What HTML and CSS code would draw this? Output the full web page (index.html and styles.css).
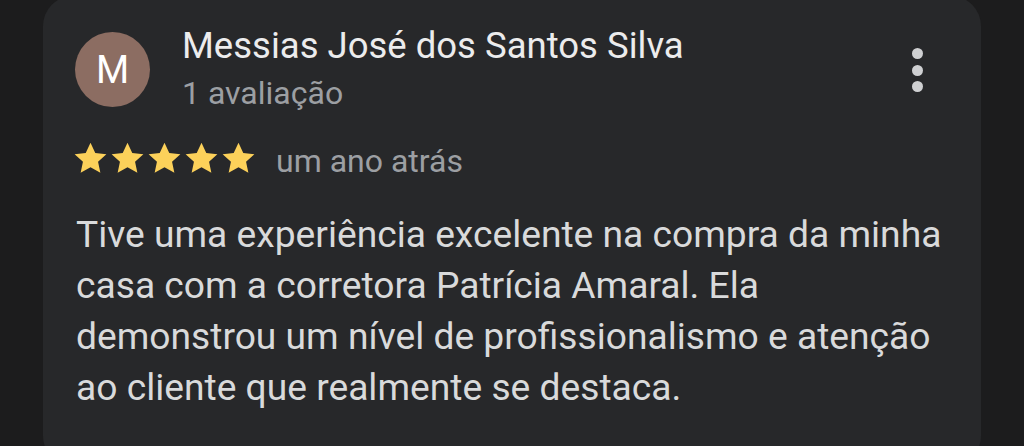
FILE: index.html
```html
<!DOCTYPE html>
<html lang="pt">
<head>
<meta charset="utf-8">
<link rel="stylesheet" href="styles.css">
</head>
<body>
<div class="card">
  <div class="header">
    <div class="avatar">M</div>
    <div class="who">
      <div class="name">Messias José dos Santos Silva</div>
      <div class="count">1 avaliação</div>
    </div>
    <div class="menu" aria-label="Mais opções">
      <span class="dot"></span><span class="dot"></span><span class="dot"></span>
    </div>
  </div>
  <div class="meta">
    <div class="stars">
      <svg viewBox="0 0 24 24" class="star"><path d="M12 1.8l3.1 6.6 7.2.8-5.4 4.9 1.5 7.1L12 17.6l-6.4 3.6 1.5-7.1-5.4-4.9 7.2-.8z"/></svg>
      <svg viewBox="0 0 24 24" class="star"><path d="M12 1.8l3.1 6.6 7.2.8-5.4 4.9 1.5 7.1L12 17.6l-6.4 3.6 1.5-7.1-5.4-4.9 7.2-.8z"/></svg>
      <svg viewBox="0 0 24 24" class="star"><path d="M12 1.8l3.1 6.6 7.2.8-5.4 4.9 1.5 7.1L12 17.6l-6.4 3.6 1.5-7.1-5.4-4.9 7.2-.8z"/></svg>
      <svg viewBox="0 0 24 24" class="star"><path d="M12 1.8l3.1 6.6 7.2.8-5.4 4.9 1.5 7.1L12 17.6l-6.4 3.6 1.5-7.1-5.4-4.9 7.2-.8z"/></svg>
      <svg viewBox="0 0 24 24" class="star"><path d="M12 1.8l3.1 6.6 7.2.8-5.4 4.9 1.5 7.1L12 17.6l-6.4 3.6 1.5-7.1-5.4-4.9 7.2-.8z"/></svg>
    </div>
    <span class="when">um ano atrás</span>
  </div>
  <p class="text">Tive uma experiência excelente na compra da minha casa com a corretora Patrícia Amaral. Ela demonstrou um nível de profissionalismo e atenção ao cliente que realmente se destaca.</p>
</div>
</body>
</html>
```
FILE: styles.css
```css
html, body {
  margin: 0;
  padding: 0;
  height: 100%;
  overflow: hidden;
}
body {
  background: #1c1c1d;
  font-family: Roboto, "Noto Sans", sans-serif;
}
.card {
  margin: -4px 0 0 43px;
  width: 938px;
  height: 470px;
  box-sizing: border-box;
  background: #27282a;
  border-radius: 30px;
  padding: 36px 0 0 32px;
}
.header {
  display: flex;
  align-items: flex-start;
}
.avatar {
  width: 75px;
  height: 75px;
  border-radius: 50%;
  background: #8c6d62;
  color: #fff;
  display: flex;
  align-items: center;
  justify-content: center;
  font-size: 38px;
  flex: none;
}
.who {
  margin-left: 32px;
  flex: 1;
}
.name {
  color: #ececed;
  font-size: 36.5px;
  line-height: 43px;
  margin-top: -8px;
}
.count {
  color: #9c9fa3;
  font-size: 32px;
  line-height: 38px;
  margin-top: 7px;
}
.menu {
  display: flex;
  flex-direction: column;
  gap: 5.5px;
  margin: 16px 58px 0 0;
}
.dot {
  width: 11px;
  height: 11px;
  border-radius: 50%;
  background: #cfd0d2;
}
.meta {
  display: flex;
  align-items: flex-start;
  margin: 28px 0 0 -3px;
}
.stars {
  display: flex;
}
.star {
  width: 37px;
  height: 37px;
  fill: #fcd15a;
}
.when {
  color: #9c9fa3;
  font-size: 32px;
  line-height: 38px;
  margin: 2px 0 0 19px;
}
.text {
  margin: 29px 0 0 1px;
  color: #d9dadb;
  font-size: 37.2px;
  line-height: 51px;
  width: 875px;
}
```
